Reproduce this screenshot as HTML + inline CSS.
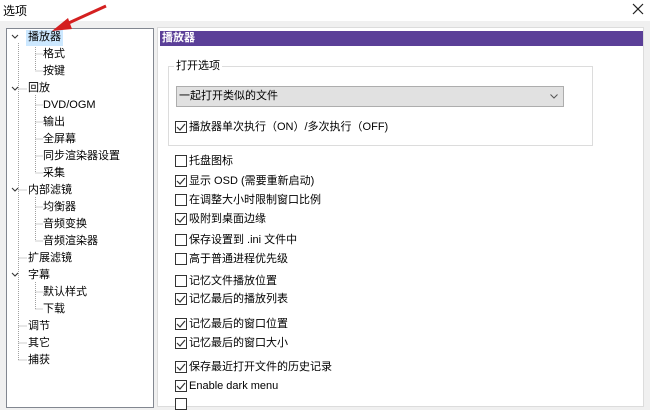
<!DOCTYPE html>
<html><head><meta charset="utf-8"><style>
*{margin:0;padding:0;box-sizing:border-box}
body{width:650px;height:402px;overflow:hidden;background:#f0f0f0;position:relative;font-family:"Liberation Sans","Noto Sans CJK SC",sans-serif;font-size:11px;color:#000}
.abs{position:absolute;white-space:nowrap}
#tree{left:6px;top:28px;width:148px;height:380px;background:#fff;border:1px solid #828790}
#panel{left:157px;top:27px;width:487px;height:380px;background:#fff;border:1px solid #dcdcdc}
.ti{position:absolute;line-height:14px;height:16px}
.cb{position:absolute;left:175px;width:12px;height:12px;border:1px solid #333;background:#fff}
.cl{position:absolute;left:189px;line-height:14px}
</style></head><body>
<div class="abs" style="left:0;top:0;width:650px;height:21px;background:#fff"></div>
<div class="abs" style="left:3px;top:2px;font-size:12px">选项</div>
<svg class="abs" style="left:632px;top:3px" width="12" height="12"><path d="M1 1L11 11M11 1L1 11" stroke="#222" stroke-width="1.2"/></svg>
<div class="abs" id="tree">
<svg style="position:absolute;left:0;top:0" width="146" height="380">
<g stroke="#a0a0a0" stroke-dasharray="1 1" fill="none">
<path d="M11.5 14V331M11.5 60H20M11.5 161H20M11.5 229H20M11.5 297H20M11.5 314H20M11.5 331H20"/>
<path d="M28.5 14V42M28.5 25H36M28.5 42H36"/>
<path d="M28.5 66V144M28.5 76H36M28.5 93H36M28.5 110H36M28.5 127H36M28.5 144H36"/>
<path d="M28.5 168V212M28.5 178H36M28.5 195H36M28.5 212H36"/>
<path d="M28.5 253V280M28.5 263H36M28.5 280H36"/>
</g>
<g stroke="#333" stroke-width="1.1" fill="none">
<path d="M5 6L8 9L11 6M5 58L8 61L11 58M5 159L8 162L11 159M5 244L8 247L11 244"/>
</g>
</svg>
<div class="ti" style="left:19px;top:1px;background:#cce8ff;padding:0 2px">播放器</div>
<div class="ti" style="left:36px;top:18px">格式</div>
<div class="ti" style="left:36px;top:35px">按键</div>
<div class="ti" style="left:21px;top:52px">回放</div>
<div class="ti" style="left:36px;top:69px">DVD/OGM</div>
<div class="ti" style="left:36px;top:86px">输出</div>
<div class="ti" style="left:36px;top:103px">全屏幕</div>
<div class="ti" style="left:36px;top:120px">同步渲染器设置</div>
<div class="ti" style="left:36px;top:137px">采集</div>
<div class="ti" style="left:21px;top:154px">内部滤镜</div>
<div class="ti" style="left:36px;top:171px">均衡器</div>
<div class="ti" style="left:36px;top:188px">音频变换</div>
<div class="ti" style="left:36px;top:205px">音频渲染器</div>
<div class="ti" style="left:21px;top:222px">扩展滤镜</div>
<div class="ti" style="left:21px;top:239px">字幕</div>
<div class="ti" style="left:36px;top:256px">默认样式</div>
<div class="ti" style="left:36px;top:273px">下载</div>
<div class="ti" style="left:21px;top:290px">调节</div>
<div class="ti" style="left:21px;top:307px">其它</div>
<div class="ti" style="left:21px;top:324px">捕获</div>
</div>
<div class="abs" id="panel"></div>
<div class="abs" style="left:160px;top:31px;width:483px;height:15px;background:#5b3f98;color:#fff;font-weight:bold;line-height:15px;padding-left:2px">播放器</div>
<div class="abs" style="left:168px;top:66px;width:425px;height:80px;border:1px solid #dcdcdc"></div>
<div class="abs" style="left:174px;top:59px;background:#fff;padding:0 2px;line-height:14px">打开选项</div>
<div class="abs" style="left:176px;top:86px;width:388px;height:21px;background:#e1e1e1;border:1px solid #adadad;line-height:19px;padding-left:2px">一起打开类似的文件</div>
<svg class="abs" style="left:550px;top:94px" width="8" height="5"><path d="M0.5 0.5L4 4L7.5 0.5" stroke="#555" fill="none"/></svg>
<div class="cb" style="top:121px"></div><div class="cl" style="top:120px">播放器单次执行（ON）/多次执行（OFF)</div>
<div class="cb" style="top:155px"></div><div class="cl" style="top:154px">托盘图标</div>
<div class="cb" style="top:175px"></div><div class="cl" style="top:174px">显示 OSD (需要重新启动)</div>
<div class="cb" style="top:194px"></div><div class="cl" style="top:193px">在调整大小时限制窗口比例</div>
<div class="cb" style="top:213px"></div><div class="cl" style="top:212px">吸附到桌面边缘</div>
<div class="cb" style="top:234px"></div><div class="cl" style="top:233px">保存设置到 .ini 文件中</div>
<div class="cb" style="top:253px"></div><div class="cl" style="top:252px">高于普通进程优先级</div>
<div class="cb" style="top:275px"></div><div class="cl" style="top:274px">记忆文件播放位置</div>
<div class="cb" style="top:293px"></div><div class="cl" style="top:292px">记忆最后的播放列表</div>
<div class="cb" style="top:318px"></div><div class="cl" style="top:317px">记忆最后的窗口位置</div>
<div class="cb" style="top:337px"></div><div class="cl" style="top:336px">记忆最后的窗口大小</div>
<div class="cb" style="top:361px"></div><div class="cl" style="top:360px">保存最近打开文件的历史记录</div>
<div class="cb" style="top:380px"></div><div class="cl" style="top:379px">Enable dark menu</div>
<div class="cb" style="top:398px"></div>
<svg class="abs" style="left:0;top:0" width="650" height="402">
<g stroke="#333" stroke-width="1.2" fill="none">
<path d="M177 127l3 3 5-6M177 181l3 3 5-6M177 219l3 3 5-6M177 299l3 3 5-6M177 324l3 3 5-6M177 343l3 3 5-6M177 367l3 3 5-6M177 386l3 3 5-6"/>
</g>
<path d="M106 6L62 26" stroke="#d42020" stroke-width="3"/>
<path d="M52 31L68 18L72 29Z" fill="#d42020"/>
</svg>
</body></html>
